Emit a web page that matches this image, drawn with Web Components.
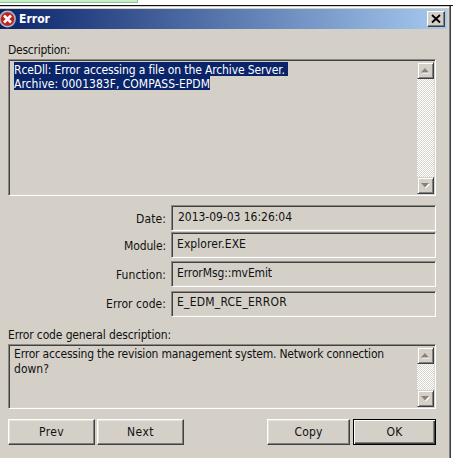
<!DOCTYPE html>
<html lang="en"><head><meta charset="utf-8"><title>Error</title>
<style>
html,body{margin:0;width:453px;height:458px;overflow:hidden;background:#fff}
body{font:12px/14px "DejaVu Sans Condensed","DejaVu Sans",sans-serif;color:#111;-webkit-font-smoothing:antialiased}
</style></head><body>
<error-dialog></error-dialog>
<script>
const define=(name,html,setup)=>customElements.define(name,class extends HTMLElement{
  connectedCallback(){
    if(this.shadowRoot)return;
    this.attachShadow({mode:'open'}).innerHTML=html;
    if(setup)setup(this,this.shadowRoot);
  }
});
// A single line of text, tracked to fill the width given in "w".
define('text-run',`<style>:host{display:block;white-space:nowrap}span{display:inline-block;white-space:pre}</style><span><slot></slot></span>`,(el,root)=>{
  const s=root.querySelector('span'),n=el.textContent.length;
  s.style.letterSpacing=((+el.getAttribute('w')-s.getBoundingClientRect().width)/n)+'px';
});
define('arrow-button',`<style>:host{display:block;box-sizing:border-box;width:17px;height:17px;background:#d4d0c8;border:1px solid;border-color:#d4d0c8 #404040 #404040 #d4d0c8;box-shadow:inset 1px 1px #fff,inset -1px -1px #808080}
svg{display:block}</style><svg width="15" height="15"><path class="hi" fill="#fff"/><path class="ar" fill="#85827d"/></svg>`,(el,root)=>{
  const down=el.hasAttribute('down');
  root.querySelector('.ar').setAttribute('d',down?'M3 5h8L7 9.500z':'M3 9.500h8L7 5z');
  root.querySelector('.hi').setAttribute('d',down?'M4 6h8L8 10.500z':'M4 10.500h8L8 6z');
});
define('scroll-bar',`<style>:host{display:flex;flex-direction:column;justify-content:space-between;width:17px;background:repeating-conic-gradient(#fff 0 25%,#d8d5ce 0 50%) 0 0/2px 2px}</style><arrow-button></arrow-button><arrow-button down></arrow-button>`);
define('sunken-box',`<style>:host{display:flex;box-sizing:border-box;justify-content:space-between;border:1px solid;border-color:#8b8883 #fff #fff #8b8883;box-shadow:inset 1px 1px #404040,inset -1px -1px #d9d5ce;padding:2px 1px 1px 5px}</style><div><slot></slot></div><slot name="bar"></slot>`);
define('push-button',`<style>:host{display:flex;box-sizing:border-box;height:26px;padding-top:5px;justify-content:center;border:1px solid;border-color:#fff #404040 #404040 #fff;box-shadow:inset -1px -1px #808080,inset 1px 1px #e6e3dd}
:host([default]){border-color:#000;box-shadow:inset 1px 1px #fff,inset -1px -1px #404040,inset -2px -2px #808080}</style><slot></slot>`);
define('field-row',`<style>:host{display:flex;justify-content:space-between;height:26px}.l{flex:1;display:flex;justify-content:flex-end;padding:7px 5px 0 0}sunken-box{width:265px;height:26px;padding-top:4px}:host(:first-child) sunken-box{padding-left:6px}:host(:last-child) sunken-box{padding-top:3px}:host(:last-child) .l{padding-top:6px}</style><div class="l"><slot name="label"></slot></div><sunken-box><slot></slot></sunken-box>`);
define('title-bar',`<style>:host{display:flex;align-items:center;box-sizing:border-box;height:20px;width:447px;padding-right:2px;background:linear-gradient(90deg,#0a246a,#a6caf0);color:#fff;font-weight:bold}
svg{display:block}text-run{flex:1;margin-left:2px}.x{box-sizing:border-box;width:18px;height:16px;background:#d4d0c8;border:1px solid;border-color:#fff #404040 #404040 #fff;box-shadow:inset -1px -1px #808080}</style>
<svg width="17" height="20" viewBox="0 0 17 20"><circle cx="7.500" cy="10" r="8.400" fill="#b9babb"/><circle cx="7.500" cy="10" r="7.200" fill="#858687"/><circle cx="7.500" cy="10" r="6.600" fill="#c61c20"/><path d="M4 6.500l7 7M11 6.500l-7 7" stroke="#fff" stroke-width="2.600"/></svg>
<text-run w="31">Error</text-run><div class="x"><svg width="16" height="14"><path d="M4 3l8 7.500M12 3l-8 7.500" stroke="#000" stroke-width="1.800"/></svg></div>`);
define('error-dialog',`<style>
:host{display:block;width:453px;height:458px;background:#fff}
.behind{height:5px;box-sizing:border-box}.green{width:138px;height:3px;box-sizing:border-box;background:#c5efc8;border-bottom:1px solid #8fc493;border-right:1px solid #8fc493}
.edge{height:1px;background:#101018}
.win{box-sizing:border-box;width:451px;height:452px;background:#d4d0c8;border-right:1px solid #404040;box-shadow:inset -1px 0 #808080,inset 0 1px #d4d0c8,inset 0 2px #fff;padding-top:3px}
.body{width:428px;margin-left:8px;padding-top:14px}
.desc{height:137px;margin-top:2px}.desc text-run{width:max-content;height:14px;line-height:16px;background:#0a246a;color:#fff}
.fields{display:grid;grid-template-rows:27px 29px 30px 26px;margin-top:9px}
.gen{margin-top:11px}.small{height:65px;margin-top:2px}.small text-run{line-height:15px}
.buttons{display:grid;grid-template-columns:87px 87px 1fr 83px 83px;margin-top:10px}
.buttons :nth-child(2){margin-left:2px;margin-right:-2px}.buttons :nth-child(3){grid-column:4;margin-left:-3px;margin-right:3px}
.buttons text-run{margin:0}
</style>
<div class="behind"><div class="green"></div></div><div class="edge"></div>
<div class="win"><title-bar></title-bar><div class="body">
<text-run w="62">Description:</text-run>
<sunken-box class="desc"><text-run w="274">RceDll: Error accessing a file on the Archive Server. </text-run><text-run w="196">Archive: 0001383F, COMPASS-EPDM</text-run><scroll-bar slot="bar"></scroll-bar></sunken-box>
<div class="fields">
<field-row><text-run slot="label" w="30">Date:</text-run><text-run w="114">2013-09-03 16:26:04</text-run></field-row>
<field-row><text-run slot="label" w="42">Module:</text-run><text-run w="69">Explorer.EXE</text-run></field-row>
<field-row><text-run slot="label" w="50">Function:</text-run><text-run w="95">ErrorMsg::mvEmit</text-run></field-row>
<field-row><text-run slot="label" w="60">Error code:</text-run><text-run w="110">E_EDM_RCE_ERROR</text-run></field-row>
</div>
<text-run class="gen" w="163">Error code general description:</text-run>
<sunken-box class="small"><text-run w="370">Error accessing the revision management system. Network connection</text-run><text-run w="35">down?</text-run><scroll-bar slot="bar"></scroll-bar></sunken-box>
<div class="buttons"><push-button><text-run w="25">Prev</text-run></push-button><push-button><text-run w="27">Next</text-run></push-button><push-button><text-run w="28">Copy</text-run></push-button><push-button default><text-run w="16">OK</text-run></push-button></div>
</div></div>`);
</script></body></html>
